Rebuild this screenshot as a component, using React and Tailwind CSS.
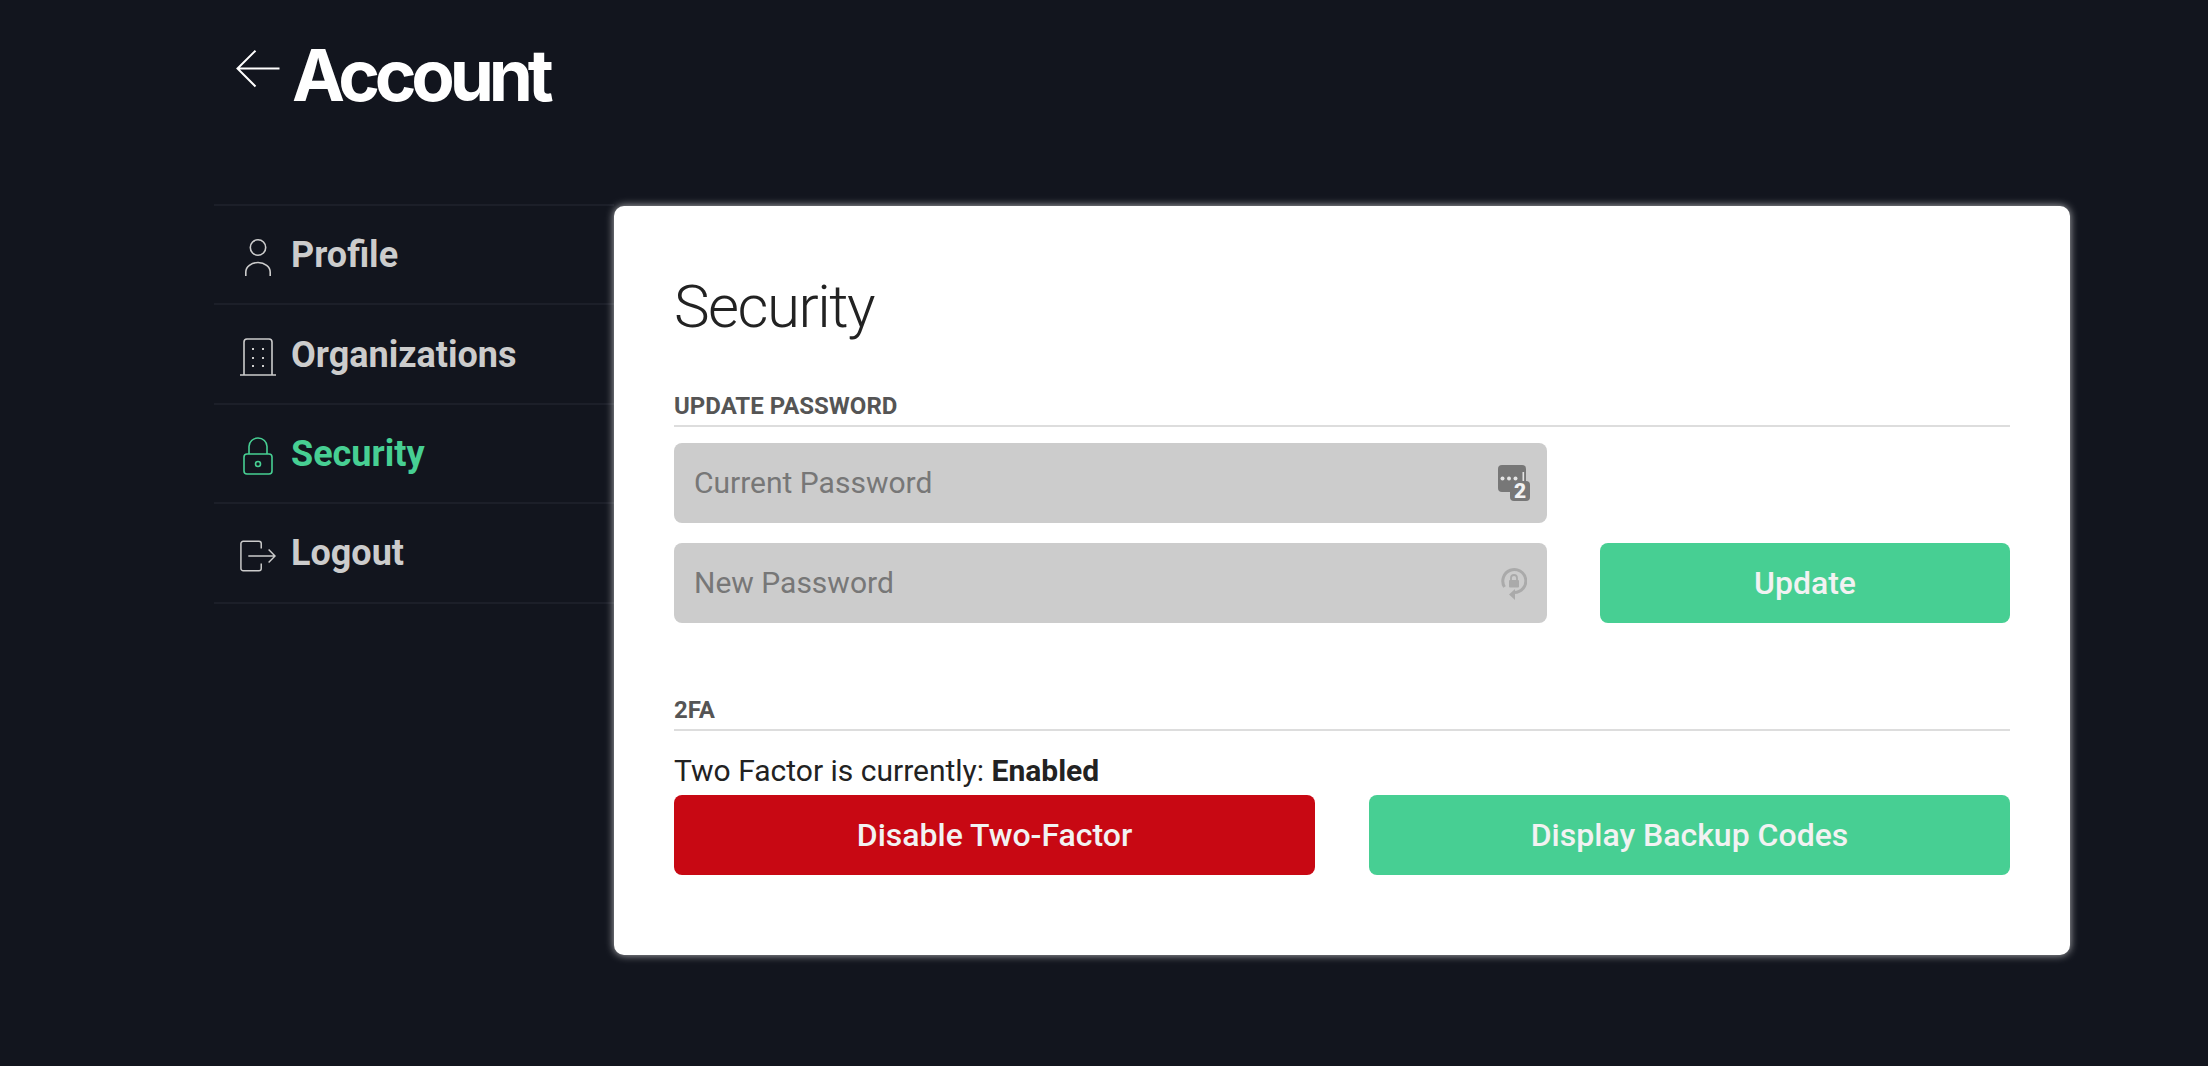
function ArrowBack() {
  return (
    <svg width="46" height="40" viewBox="0 0 46 40" fill="none" stroke="#fff" strokeWidth="2" className="shrink-0">
      <path d="M43.500 18.500H1.500M19.500 0.700L1.500 18.500l18 18" />
    </svg>
  );
}
function UserIcon() {
  return (
    <svg width="26" height="37" viewBox="0 0 26 37" fill="none" stroke="#ccc" strokeWidth="1.600">
      <circle cx="13" cy="8.500" r="7.700" />
      <path d="M0.800 37v-4a12.200 9.500 0 0 1 24.400 0v4" />
    </svg>
  );
}
function BuildingIcon() {
  return (
    <svg width="36" height="38" viewBox="0 0 36 38" fill="none" stroke="#ccc" strokeWidth="1.600">
      <path d="M4 37V4a3 3 0 0 1 3-3h22a3 3 0 0 1 3 3v33M0 37h36" />
      <g fill="#ccc" stroke="none">
        <rect x="12" y="10" width="2" height="2" /><rect x="22" y="10" width="2" height="2" />
        <rect x="12" y="19" width="2" height="2" /><rect x="22" y="19" width="2" height="2" />
        <rect x="12" y="27" width="2" height="2" /><rect x="22" y="27" width="2" height="2" />
      </g>
    </svg>
  );
}
function LockIcon() {
  return (
    <svg width="30" height="38" viewBox="0 0 30 38" fill="none" stroke="#47cf93" strokeWidth="1.600">
      <rect x="1" y="17" width="28" height="20" rx="3" />
      <path d="M6 17V9.500a9 8.500 0 0 1 18 0V17" />
      <circle cx="15" cy="27" r="2.500" />
    </svg>
  );
}
function LogoutIcon() {
  return (
    <svg width="39" height="34" viewBox="0 0 39 34" fill="none" stroke="#ccc" strokeWidth="1.600">
      <path d="M23 9V3.500A2.500 2.500 0 0 0 20.500 1H3.500A2.500 2.500 0 0 0 1 3.500v27A2.500 2.500 0 0 0 3.500 33h17a2.500 2.500 0 0 0 2.500-2.500V25" />
      <path d="M9 17h29M31 10l7 7-7 7" />
    </svg>
  );
}
function KeyTwoIcon() {
  return (
    <svg width="32" height="36" viewBox="0 0 32 36" className="shrink-0 overflow-visible">
      <rect x="0" y="0" width="28" height="27" rx="4" fill="#777" />
      <g fill="#e4e4e4">
        <circle cx="4.500" cy="13.500" r="2" /><circle cx="11" cy="13.500" r="2" /><circle cx="17.500" cy="13.500" r="2" />
        <rect x="24.500" y="7" width="1.600" height="10" />
      </g>
      <rect x="12" y="16" width="20" height="20" rx="4" fill="#777" />
      <text x="22" y="33" textAnchor="middle" fontFamily="Roboto" fontWeight="900" fontSize="21" fill="#f2f2f2">2</text>
    </svg>
  );
}
function LockRotateIcon() {
  return (
    <svg width="26" height="33" viewBox="0 0 26 33" fill="none" className="shrink-0">
      <path d="M3.500 20A11.500 11.500 0 1 1 13 25.500" stroke="#aaa" strokeWidth="3" />
      <path d="M14 22v11l-6-5.500z" fill="#aaa" />
      <rect x="8" y="13" width="10" height="7.500" rx="1" fill="#aaa" />
      <path d="M10 13v-2a3 3 0 0 1 6 0v2" stroke="#aaa" strokeWidth="1.800" />
    </svg>
  );
}

function NavItem({ icon, label, active }) {
  return (
    <div className="flex h-[99.4px] items-center border-b-2 border-[#1c1f29]">
      <div className="mt-[6px] flex w-[77px] justify-center pl-[10px]">
        <div className="flex w-[36px] justify-center">{icon}</div>
      </div>
      <span className={`pt-[1px] text-[36px] font-bold ${active ? "text-[#47cf93]" : "text-[#cccccc]"}`}>{label}</span>
    </div>
  );
}

function Field({ placeholder, icon }) {
  return (
    <div className="flex h-20 items-center justify-between rounded-lg bg-[#cccccc] pl-5 pr-[17px]">
      <span className="pb-[2px] text-[30px] text-[#777777]">{placeholder}</span>
      <div className="flex w-8 justify-center">{icon}</div>
    </div>
  );
}

function SectionTitle({ children }) {
  return (
    <div className="border-b-2 border-[#dddddd] pb-[5px] text-[24px] leading-[28px] font-bold text-[#555555]">
      {children}
    </div>
  );
}

function Btn({ children, color }) {
  return (
    <button className={`flex h-20 items-center justify-center rounded-lg text-[32px] font-medium text-[#f2f2f2] ${color}`}>
      {children}
    </button>
  );
}

export default function App() {
  return (
    <div className="h-[1066px] overflow-hidden bg-[#12151e] pl-[214px] font-['Roboto',sans-serif]">
      <div className="flex h-[204px] items-start gap-[10px] pl-[22px] pt-[28px]">
        <div className="pt-[22px]"><ArrowBack /></div>
        <h1 className="font-['Inter',sans-serif] text-[71px] leading-[94px] font-bold tracking-[-5.2px] text-white">Account</h1>
      </div>
      <div className="flex items-start">
        <div className="w-[400px] border-t-2 border-[#1c1f29]">
          <NavItem icon={<UserIcon />} label="Profile" />
          <NavItem icon={<BuildingIcon />} label="Organizations" />
          <NavItem icon={<LockIcon />} label="Security" active />
          <NavItem icon={<LogoutIcon />} label="Logout" />
        </div>
        <div className="mt-[2px] h-[749px] w-[1456px] rounded-[10px] bg-white px-[60px] pt-[66px] shadow-[0_0_8px_rgba(255,255,255,0.7)]">
          <h2 className="text-[60px] leading-[70px] font-light tracking-[-1.500px] text-[#222222]">Security</h2>
          <div className="mt-[50px]"><SectionTitle>UPDATE PASSWORD</SectionTitle></div>
          <div className="mt-[16px] grid grid-cols-[873px_410px] justify-between gap-y-5">
            <Field placeholder="Current Password" icon={<KeyTwoIcon />} />
            <div />
            <Field placeholder="New Password" icon={<LockRotateIcon />} />
            <Btn color="bg-[#47cf93]">Update</Btn>
          </div>
          <div className="mt-[73px]"><SectionTitle>2FA</SectionTitle></div>
          <p className="mt-[24px] text-[30px] leading-[32px] text-[#222222]">
            Two Factor is currently: <b className="font-bold">Enabled</b>
          </p>
          <div className="mt-[8px] grid grid-cols-2 gap-[54px]">
            <Btn color="bg-[#c80813]">Disable Two-Factor</Btn>
            <Btn color="bg-[#47cf93]">Display Backup Codes</Btn>
          </div>
        </div>
      </div>
    </div>
  );
}
